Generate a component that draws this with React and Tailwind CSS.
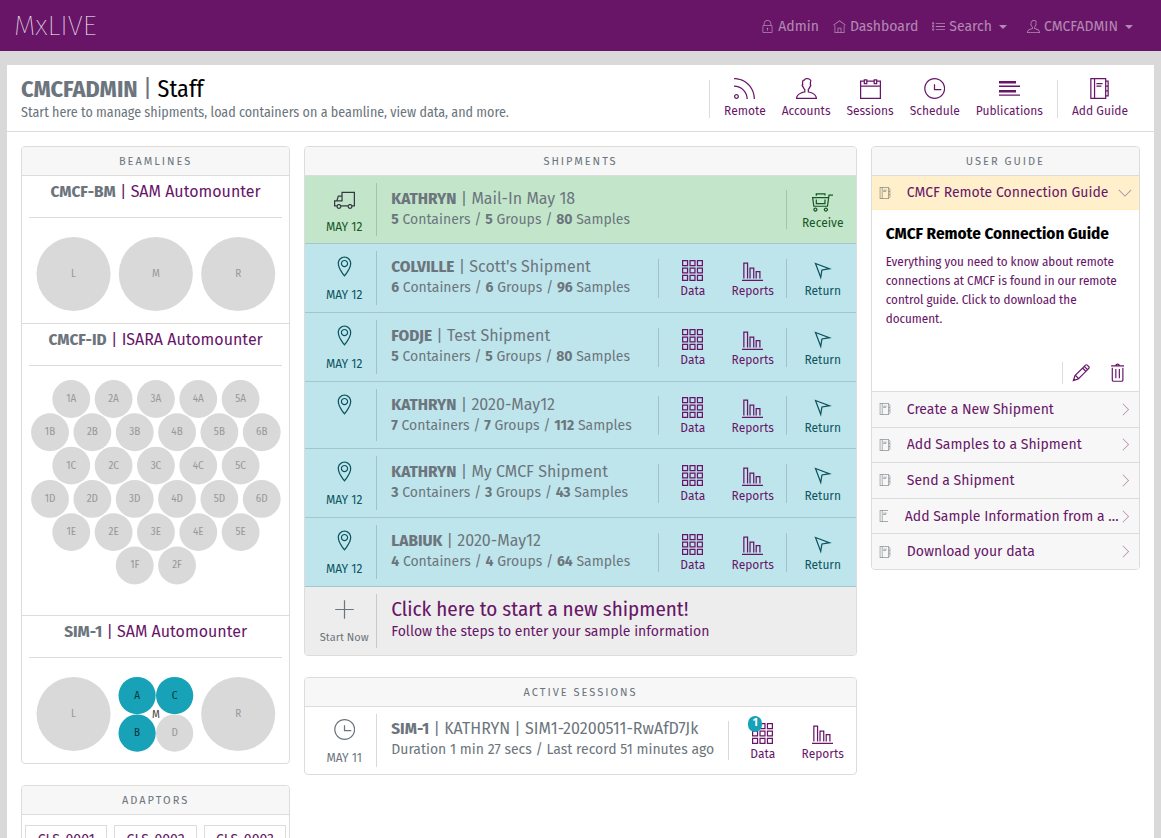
import {
  TfiLock, TfiHome, TfiList, TfiUser, TfiRssAlt, TfiCalendar, TfiTime, TfiAgenda, TfiTruck,
  TfiLocationPin, TfiShoppingCartFull, TfiLayoutGrid3, TfiBarChartAlt, TfiLocationArrow,
  TfiPlus, TfiPencil, TfiTrash, TfiAngleRight, TfiAngleDown,
} from 'react-icons/tfi';

const COND = "font-['Fira_Sans_Condensed','Fira_Sans',Roboto,sans-serif]";

function Caret() {
  return (
    <svg viewBox="0 0 8 4" className="ml-[7px] h-1 w-2" fill="currentColor" aria-hidden="true">
      <path d="M0 0h8L4 4z" />
    </svg>
  );
}

function PublicationsIcon({ className }) {
  return (
    <svg viewBox="0 0 21 21" className={className} fill="currentColor" aria-hidden="true">
      <path d="M0 3h17v2.4H0zM0 7.6h21v1.4H0zM0 12h17v2.4H0zM0 16.4h21v1.4H0z" />
    </svg>
  );
}

function NavLink({ icon: Icon, label, caret }) {
  return (
    <a href="#" className="flex items-center whitespace-nowrap">
      <Icon className="mr-1 size-[13px]" />
      {label}
      {caret && <Caret />}
    </a>
  );
}

function Navbar() {
  return (
    <nav className="flex h-[51px] items-center justify-between bg-[#681568] pr-7 pl-[14px] text-white">
      <a href="#" className="text-[28px] leading-none font-extralight">MxLIVE</a>
      <div className="flex items-center pt-[2px] text-[14px] text-white/50">
        <div className="flex gap-[14px]">
          <NavLink icon={TfiLock} label="Admin" />
          <NavLink icon={TfiHome} label="Dashboard" />
          <NavLink icon={TfiList} label="Search" caret />
        </div>
        <div className="ml-5">
          <NavLink icon={TfiUser} label="CMCFADMIN" caret />
        </div>
      </div>
    </nav>
  );
}

function Tool({ icon: Icon, label }) {
  return (
    <a href="#" className="flex flex-col items-center gap-1 text-[#681568]">
      <Icon className="size-[21px]" />
      <span className="text-[12px] leading-4">{label}</span>
    </a>
  );
}

function PageHeader() {
  return (
    <header className="flex h-[67px] items-center justify-between border-b border-[#dcdcdc] pt-px pr-[26px] pl-[14px]">
      <div className={COND}>
        <h1 className="text-[24px] leading-7 text-black">
          <span className="font-bold text-[#6c757d]">CMCFADMIN</span>
          <span className="text-[#6c757d]"> | </span>Staff
        </h1>
        <p className="text-[14px] leading-5 text-[#6c757d]">
          Start here to manage shipments, load containers on a beamline, view data, and more.
        </p>
      </div>
      <div className="flex">
        <div className="flex h-[38px] items-center gap-4 border-l border-[#dcdcdc] px-[14px]">
          <Tool icon={TfiRssAlt} label="Remote" />
          <Tool icon={TfiUser} label="Accounts" />
          <Tool icon={TfiCalendar} label="Sessions" />
          <Tool icon={TfiTime} label="Schedule" />
          <Tool icon={PublicationsIcon} label="Publications" />
        </div>
        <div className="flex h-[38px] items-center border-l border-[#dcdcdc] pl-[14px]">
          <Tool icon={TfiAgenda} label="Add Guide" />
        </div>
      </div>
    </header>
  );
}

function Card({ title, children }) {
  return (
    <section className="overflow-hidden rounded border border-[#dcdcdc] bg-white">
      <h2 className="flex h-[28px] items-center justify-center bg-[#f7f7f7] pt-[2px] text-[11px] tracking-[2px] text-[#6c757d] uppercase">
        {title}
      </h2>
      {children}
    </section>
  );
}

function Port({ cx, cy, r, label, full }) {
  return (
    <g>
      <circle cx={cx} cy={cy} r={r} fill={full ? '#17a2b8' : '#d9d9d9'} />
      <text x={cx} y={cy + 3} textAnchor="middle" fontSize="11" fill={full ? '#08363d' : '#999999'}>
        {label}
      </text>
    </g>
  );
}

function SamDiagram({ split }) {
  return (
    <svg viewBox="0 0 267 105" className={`block w-full ${COND}`}>
      <Port cx={51.5} cy={56} r={37} label="L" />
      {split ? (
        <>
          <Port cx={115} cy={37.5} r={18.6} label="A" full />
          <Port cx={152.5} cy={37.5} r={18.6} label="C" full />
          <Port cx={115} cy={75} r={18.6} label="B" full />
          <Port cx={152.5} cy={75} r={18.6} label="D" />
          <text x="133.7" y="60" textAnchor="middle" fontSize="11" fill="#444444">M</text>
        </>
      ) : (
        <Port cx={133.7} cy={56} r={37} label="M" />
      )}
      <Port cx={216} cy={56} r={37} label="R" />
    </svg>
  );
}

const PUCKS = [
  { row: 'A', count: 5, x: 49.2, y: 33 },
  { row: 'B', count: 6, x: 28, y: 66.2 },
  { row: 'C', count: 5, x: 49.2, y: 99.5 },
  { row: 'D', count: 6, x: 28, y: 132.8 },
  { row: 'E', count: 5, x: 49.2, y: 166 },
  { row: 'F', count: 2, x: 112.6, y: 199.3 },
];

function IsaraDiagram() {
  return (
    <svg viewBox="0 0 267 249" className={`block w-full ${COND}`}>
      {PUCKS.map(({ row, count, x, y }) =>
        Array.from({ length: count }, (_, i) => (
          <Port key={row + i} cx={x + i * 42.3} cy={y} r={18.9} label={`${i + 1}${row}`} />
        )),
      )}
    </svg>
  );
}

function Beamline({ name, kind, children }) {
  return (
    <div className="border-t border-[#dcdcdc]">
      <h3 className="mx-[7px] h-[42px] border-b border-[#dcdcdc] pt-1 text-center text-[16px] leading-6 text-[#681568]">
        <span className={`text-[17px] font-bold text-[#6c757d] ${COND}`}>{name}</span> | {kind}
      </h3>
      {children}
    </div>
  );
}

const SHIPMENTS = [
  { owner: 'KATHRYN', name: 'Mail-In May 18', date: 'MAY 12', counts: [5, 5, 80], arriving: true, h: 'min-h-[68px]' },
  { owner: 'COLVILLE', name: "Scott's Shipment", date: 'MAY 12', counts: [6, 6, 96], h: 'min-h-[69px]' },
  { owner: 'FODJE', name: 'Test Shipment', date: 'MAY 12', counts: [5, 5, 80], h: 'min-h-[69px]' },
  { owner: 'KATHRYN', name: '2020-May12', date: '', counts: [7, 7, 112], h: 'min-h-[67px]' },
  { owner: 'KATHRYN', name: 'My CMCF Shipment', date: 'MAY 12', counts: [3, 3, 43], h: 'min-h-[69px]' },
  { owner: 'LABIUK', name: '2020-May12', date: 'MAY 12', counts: [4, 4, 64], h: 'min-h-[69px]' },
];

function Lead({ icon: Icon, label, iconClass = '', className = 'text-[12px]' }) {
  return (
    <div className={`my-[7px] flex w-[72px] shrink-0 flex-col items-center border-r border-black/15 pt-[5px] pl-[7px] leading-4 ${className}`}>
      <Icon className={`mb-[10px] size-[21px] ${iconClass}`} />
      <span>{label}</span>
    </div>
  );
}

function Action({ icon: Icon, label, badge }) {
  return (
    <a href="#" className="flex w-[60px] flex-col items-center gap-[2px] pt-[3px]">
      <span className="relative">
        <Icon className="size-[21px]" />
        {badge && (
          <span className="absolute -top-[7px] -left-1 flex h-4 w-[14px] items-center justify-center rounded-full bg-[#17a2b8] text-[11px] font-bold text-white">
            {badge}
          </span>
        )}
      </span>
      <span className="text-[12px] leading-4">{label}</span>
    </a>
  );
}

function Reports({ badge }) {
  return (
    <div className="flex h-[39px] items-center border-l border-black/15 pr-[3px] pl-[4px] text-[#681568]">
      <Action icon={TfiLayoutGrid3} label="Data" badge={badge} />
      <Action icon={TfiBarChartAlt} label="Reports" />
    </div>
  );
}

function Shipment({ owner, name, date, counts, arriving, h }) {
  const [containers, groups, samples] = counts;
  return (
    <li className={`flex border-t ${h} ${arriving ? 'border-[#dcdcdc] bg-[#c3e6cb] text-[#155724]' : 'border-[#a3c6cc] bg-[#bee5eb] text-[#0c5460]'}`}>
      <Lead
        icon={arriving ? TfiTruck : TfiLocationPin}
        label={date}
        iconClass={arriving ? 'text-[#343a40]' : ''}
      />
      <div className="flex-1 pt-3 pl-[14px] text-[#6c757d]">
        <h3 className="text-[16px] leading-[22px]">
          <span className={`text-[17px] font-bold ${COND}`}>{owner}</span> | {name}
        </h3>
        <p className="text-[14px] leading-5">
          <b>{containers}</b> Containers / <b>{groups}</b> Groups / <b>{samples}</b> Samples
        </p>
      </div>
      <div className="flex items-center">
        {!arriving && <Reports />}
        <div className="flex h-[39px] items-center border-l border-black/15 pr-[3px] pl-[6px]">
          {arriving ? (
            <Action icon={TfiShoppingCartFull} label="Receive" />
          ) : (
            <Action icon={TfiLocationArrow} label="Return" />
          )}
        </div>
      </div>
    </li>
  );
}

const GUIDES = [
  { title: 'Create a New Shipment' },
  { title: 'Add Samples to a Shipment' },
  { title: 'Send a Shipment' },
  { title: 'Add Sample Information from a Spreadsheet', clipped: true },
  { title: 'Download your data' },
];

function UserGuide() {
  return (
    <Card title="User Guide">
      <a href="#" className="flex h-[35px] items-center border-t border-b border-t-[#dcdcdc] border-b-[#ffeeba] bg-[#fff0cb] px-[7px] text-[14px] text-[#681568]">
        <TfiAgenda className="mr-4 size-3 shrink-0 text-[#8a8a7c]" />
        <span className="flex-1">CMCF Remote Connection Guide</span>
        <TfiAngleDown className="size-[14px] text-[#b58ab0]" />
      </a>
      <div className={`px-[14px] pt-3 ${COND}`}>
        <h3 className="text-[17px] leading-6 font-bold text-black">CMCF Remote Connection Guide</h3>
        <p className="mt-[6px] text-[13px] leading-[19px] text-[#681568]">
          Everything you need to know about remote connections at CMCF is found in our remote control guide. Click to
          download the document.
        </p>
      </div>
      <div className="mt-[34px] mb-[7px] flex justify-end pr-3 text-[#681568]">
        <div className="flex gap-4 border-l border-[#dcdcdc] pl-2">
          <button type="button" aria-label="Edit guide" className="py-px">
            <TfiPencil className="size-[20px]" />
          </button>
          <button type="button" aria-label="Delete guide" className="py-px">
            <TfiTrash className="size-[20px]" />
          </button>
        </div>
      </div>
      <ul className="grid min-h-[178px] auto-rows-fr grid-cols-1 bg-[#f7f7f7] text-[14px] text-[#681568]">
        {GUIDES.map(({ title, clipped }) => (
          <li key={title} className="border-t border-[#dcdcdc]">
            <a href="#" className="flex h-full items-center px-[7px]">
              <span className={`flex shrink-0 overflow-hidden ${clipped ? 'mr-[17px] w-[9px]' : 'mr-4 w-3'}`}>
                <TfiAgenda className="size-3 shrink-0 text-[#8d9399]" />
              </span>
              <span className="min-w-0 flex-1 truncate">{title}</span>
              <TfiAngleRight className="size-[13px] shrink-0 text-[#b58ab0]" />
            </a>
          </li>
        ))}
      </ul>
    </Card>
  );
}

export default function App() {
  return (
    <div className="min-h-screen bg-[#d9d9d9] font-['Fira_Sans',Roboto,sans-serif]">
      <Navbar />
      <main className="mx-[7px] mt-[14px] bg-white">
        <PageHeader />
        <div className="grid grid-cols-4 items-start gap-[14px] p-[14px]">
          <div className="grid gap-[21px]">
            <Card title="Beamlines">
              <Beamline name="CMCF-BM" kind="SAM Automounter"><SamDiagram /></Beamline>
              <Beamline name="CMCF-ID" kind="ISARA Automounter"><IsaraDiagram /></Beamline>
              <Beamline name="SIM-1" kind="SAM Automounter"><SamDiagram split /></Beamline>
            </Card>
            <Card title="Adaptors">
              <div className="grid grid-cols-3 gap-[7px] border-t border-[#dcdcdc] px-[3px] py-[10px]">
                {['CLS-0001', 'CLS-0002', 'CLS-0003'].map((name) => (
                  <a key={name} href="#" className="border border-[#dcdcdc] py-1 text-center text-[14px] leading-5 text-[#681568]">
                    {name}
                  </a>
                ))}
              </div>
            </Card>
          </div>

          <div className="col-span-2 grid gap-[21px]">
            <Card title="Shipments">
              <ul>
                {SHIPMENTS.map((s) => (
                  <Shipment key={s.owner + s.name} {...s} />
                ))}
                <li>
                  <a href="#" className="flex min-h-[69px] border-t border-[#a3c6cc] bg-[#ededed] text-[#681568]">
                    <Lead icon={TfiPlus} label="Start Now" className="text-[11px] text-[#6c757d]" />
                    <div className="flex-1 pt-[9px] pl-[14px]">
                      <h3 className={`text-[21px] leading-[26px] ${COND}`}>Click here to start a new shipment!</h3>
                      <p className="text-[14px] leading-5">Follow the steps to enter your sample information</p>
                    </div>
                  </a>
                </li>
              </ul>
            </Card>
            <Card title="Active Sessions">
              <div className="flex min-h-[68px] border-t border-[#dcdcdc] text-[#6c757d]">
                <Lead icon={TfiTime} label="MAY 11" />
                <div className="flex-1 pt-[11px] pl-[14px]">
                  <h3 className="text-[16px] leading-[22px]">
                    <span className={`text-[17px] font-bold ${COND}`}>SIM-1</span> | KATHRYN | SIM1-20200511-RwAfD7Jk
                  </h3>
                  <p className="text-[14px] leading-5">Duration 1 min 27 secs / Last record 51 minutes ago</p>
                </div>
                <div className="flex items-center"><Reports badge="1" /></div>
              </div>
            </Card>
          </div>

          <UserGuide />
        </div>
      </main>
    </div>
  );
}
